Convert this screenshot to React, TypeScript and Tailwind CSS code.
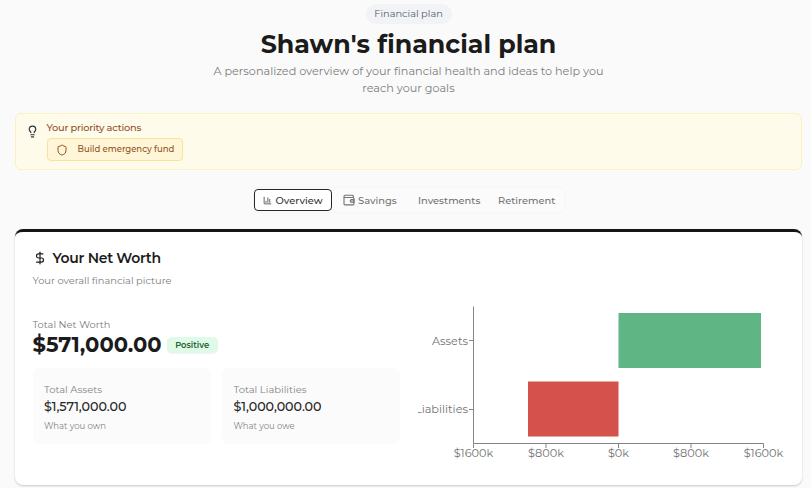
import { ChartColumn, DollarSign, Lightbulb, Shield } from "lucide-react";

function StatTile({ label, value, note }: { label: string; value: string; note: string }) {
  return (
    <div className="h-[76px] w-[178px] rounded-md bg-[#fbfbfb] px-[11.5px] pt-[14px] whitespace-nowrap">
      <div className="text-[9.95px] leading-[14px] text-[#858585]">{label}</div>
      <div className="mt-px text-[12.7px] leading-[19px] font-medium text-[#262626]">{value}</div>
      <div className="mt-[3px] text-[8.5px] leading-[14px] text-[#858585]">{note}</div>
    </div>
  );
}

function WalletIcon() {
  return (
    <svg viewBox="0 0 12 12" className="mr-[3.5px] h-3 w-3 shrink-0" fill="none" stroke="currentColor" strokeWidth="1.1">
      <path d="M10.3 3.4V2.1a.8.8 0 0 0-.8-.8H2.1a1.1 1.1 0 0 0 0 2.2h8a.8.8 0 0 1 .8.8v5.8a.8.8 0 0 1-.8.8H2a1 1 0 0 1-1-1V2.4" />
      <path d="M10.9 5.6H8.6a1.3 1.3 0 0 0 0 2.7h2.3z" fill="currentColor" fillOpacity="0.35" />
    </svg>
  );
}

const ticks = [
  { x: 56.5, label: "$1600k" },
  { x: 129, label: "$800k" },
  { x: 201.5, label: "$0k" },
  { x: 274, label: "$800k" },
  { x: 346.5, label: "$1600k" },
];

function NetWorthChart() {
  return (
    <svg width="371" height="162" viewBox="1 0 371 162" className="shrink-0 overflow-hidden text-[11.3px]" fill="#737373">
      <rect x="201.5" y="8" width="142.5" height="55" fill="#60b584" />
      <rect x="111" y="76.5" width="90.5" height="55" fill="#d4524b" />
      <g stroke="#858585" strokeWidth="1">
        <path d="M56.5 1.5V138.5H346.5" fill="none" />
        <path d="M52 35.5H56.5M52 104.5H56.5" />
        {ticks.map((t) => (
          <path key={t.x} d={`M${t.x} 138.5V143`} />
        ))}
      </g>
      <text x="51" y="40" textAnchor="end">Assets</text>
      <text x="51" y="108" textAnchor="end">Liabilities</text>
      {ticks.map((t) => (
        <text key={t.x} x={t.x} y="152" textAnchor="middle">{t.label}</text>
      ))}
    </svg>
  );
}

export default function App() {
  return (
    <div className="h-[488px] w-[811px] overflow-hidden bg-[#fafafa] pr-[9px] pl-[15px] font-['Montserrat','Inter',sans-serif] text-[#1b1b1b]">
      <header className="flex flex-col items-center pt-1 whitespace-nowrap">
        <span className="flex h-5 w-[86px] items-center justify-center rounded-full bg-[#f2f3f6] text-[9.8px] text-[#566072]">Financial plan</span>
        <h1 className="mt-[4px] text-[25.3px] leading-[33px] font-bold">Shawn's financial plan</h1>
        <p className="mt-[2px] text-center text-[11.25px] leading-[17px] text-[#7d7d7d]">
          A personalized overview of your financial health and ideas to help you
          <br />
          reach your goals
        </p>
      </header>

      <section className="mt-4 flex h-[57px] rounded-md border border-[#fbf0bf] bg-[#fffbeb] pt-[7px] pl-[10px] whitespace-nowrap">
        <Lightbulb className="mt-[4px] h-[13px] w-[13px] text-[#26333f]" strokeWidth={2.2} />
        <div className="ml-[7.5px]">
          <div className="text-[9.8px] leading-[14px] font-medium tracking-[-0.23px] text-[#92501f]">Your priority actions</div>
          <button className="mt-[3px] flex h-[23px] w-[136px] items-center rounded border border-[#f7e399] bg-[#fef6d6] pl-[8px] text-[8.5px] font-medium text-[#92501f]">
            <Shield className="mr-[10px] h-3 w-3 shrink-0" strokeWidth={2} />
            Build emergency fund
          </button>
        </div>
      </section>

      <nav className="mx-auto mt-[17px] flex h-[26px] w-[312px] items-center rounded-md border border-[#f6f6f6] bg-[#fbfbfb] text-[9.9px] font-medium whitespace-nowrap text-[#747474]">
        <span className="flex h-[22px] w-[78px] items-center rounded border-[1.5px] border-[#262626] bg-white pl-2 text-[#333333]">
          <ChartColumn className="mr-1 h-[9px] w-[9px]" />
          Overview
        </span>
        <span className="ml-[11px] flex w-[75.5px] items-center">
          <WalletIcon />
          Savings
        </span>
        <span className="w-20">Investments</span>
        <span>Retirement</span>
      </nav>

      <main className="mt-[16px] h-[256px] rounded-lg border-t-[3px] border-[#151515] bg-white px-[17.5px] shadow-[0_1px_2px_rgba(0,0,0,0.2)]">
        <div className="flex h-[55px] flex-col pt-[16px] whitespace-nowrap">
          <h2 className="flex items-center text-[14px] leading-[20px] font-semibold tracking-[-0.3px]">
            <DollarSign className="mr-[6px] h-[14px] w-[14px]" strokeWidth={2} />
            Your Net Worth
          </h2>
          <p className="mt-[4px] text-[9.85px] leading-[16px] text-[#7d7d7d]">Your overall financial picture</p>
        </div>
        <div className="flex pt-[18px]">
          <div className="w-[368px] pt-[12px] whitespace-nowrap">
            <div className="text-[9.85px] leading-[15px] text-[#7d7d7d]">Total Net Worth</div>
            <div className="flex h-[26px] items-center">
              <span className="text-[21.1px] leading-[26px] font-bold">$571,000.00</span>
              <span className="ml-[5px] flex h-4 w-[51px] items-center justify-center rounded-[5px] bg-[#dffbe7] text-[8.4px] font-semibold text-[#246238] shadow-[0_1px_1px_rgba(0,0,0,0.05)]">Positive</span>
            </div>
            <div className="mt-[10px] flex gap-[11.5px]">
              <StatTile label="Total Assets" value="$1,571,000.00" note="What you own" />
              <StatTile label="Total Liabilities" value="$1,000,000.00" note="What you owe" />
            </div>
          </div>
          <div className="ml-[17.5px]">
            <NetWorthChart />
          </div>
        </div>
      </main>
    </div>
  );
}
